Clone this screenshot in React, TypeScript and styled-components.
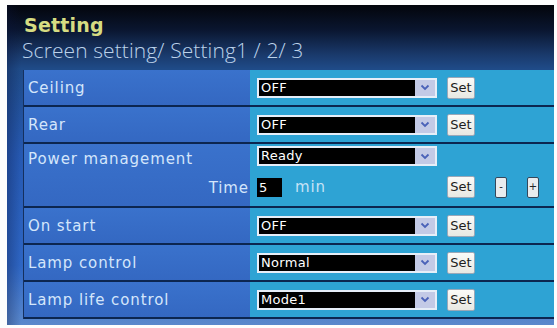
import React from 'react';
import styled, { createGlobalStyle } from 'styled-components';

const Global = createGlobalStyle`
  html, body {
    margin: 0;
    padding: 0;
    background: #ffffff;
  }
`;

const Frame = styled.div`
  width: 557px;
  height: 328px;
  box-sizing: border-box;
  padding: 5px 3px 3px 7px;
  background: #fdfdfd;
`;

const Panel = styled.div`
  height: 100%;
  box-sizing: border-box;
  display: flex;
  flex-direction: column;
  padding-left: 16px;
  background:
    linear-gradient(90deg, rgba(10, 20, 60, 0.3) 0px, rgba(10, 20, 60, 0) 14px),
    linear-gradient(180deg, #03050b 0px, #0a1630 25px, #1a3a6c 50px, #1f4b88 64px, #2659b2 150px, #2e66c4 260px, #5a88cc 320px);
`;

const Header = styled.div`
  height: 65px;
  box-sizing: border-box;
  padding: 8px 0 0 1px;
  display: flex;
  flex-direction: column;
`;

const Title = styled.div`
  font-family: 'DejaVu Sans', sans-serif;
  font-weight: bold;
  font-size: 19px;
  line-height: 24px;
  color: #d6dc82;
  letter-spacing: 0.2px;
`;

const Crumb = styled.div`
  font-family: 'Open Sans', sans-serif;
  font-weight: 300;
  font-size: 21px;
  line-height: 27px;
  color: #bcd2ea;
  margin-left: -2px;
  letter-spacing: 0.1px;
`;

const Table = styled.div`
  display: flex;
  flex-direction: column;
  border-left: 1px solid #15305e;
`;

const Row = styled.div<{ $tall?: boolean }>`
  display: grid;
  grid-template-columns: 226px 1fr;
  height: ${(p) => (p.$tall ? 62 : 35)}px;
  border-bottom: 2px solid #0c2650;
`;

const LabelCell = styled.div<{ $tall?: boolean }>`
  background: linear-gradient(180deg, #3a72cc, #3468c2);
  display: flex;
  flex-direction: column;
  justify-content: ${(p) => (p.$tall ? 'space-between' : 'center')};
  padding: ${(p) => (p.$tall ? '4px 0 7px 4px' : '0 0 0 4px')};
  font-family: 'DejaVu Sans', sans-serif;
  font-size: 15px;
  letter-spacing: 0.9px;
  color: #d4e6fb;
`;

const LabelLine = styled.div<{ $right?: boolean }>`
  height: 22px;
  line-height: 22px;
  text-align: ${(p) => (p.$right ? 'right' : 'left')};
  padding-right: ${(p) => (p.$right ? '1px' : '0')};
`;

const ValueCell = styled.div<{ $tall?: boolean }>`
  background: #2ea3d4;
  display: flex;
  flex-direction: column;
  justify-content: ${(p) => (p.$tall ? 'space-between' : 'center')};
  padding: ${(p) => (p.$tall ? '1px 0 8px 7px' : '0 0 0 7px')};
`;

const Line = styled.div`
  display: flex;
  align-items: center;
  height: 22px;
`;

const Select = styled.div`
  width: 180px;
  height: 20px;
  box-sizing: border-box;
  border: 2px solid #e6eef8;
  display: flex;
  background: #000;
`;

const SelectText = styled.div`
  flex: 1;
  color: #ffffff;
  font-family: 'DejaVu Sans', sans-serif;
  font-size: 13px;
  line-height: 16px;
  padding-left: 2px;
  letter-spacing: 0.3px;
`;

const Arrow = styled.div`
  width: 20px;
  background: #c3cae6;
  display: flex;
  align-items: center;
  justify-content: center;
`;

const SetButton = styled.div`
  margin-left: 10px;
  width: 28px;
  height: 22px;
  box-sizing: border-box;
  border: 1px solid #9aa8b8;
  border-radius: 2px;
  background: linear-gradient(180deg, #fbfbf8, #e8e8e2);
  color: #1c1c1c;
  font-family: 'DejaVu Sans', sans-serif;
  font-size: 13px;
  line-height: 20px;
  text-align: center;
`;

const StepButton = styled.div<{ $gap: number }>`
  margin-left: ${(p) => p.$gap}px;
  width: 12px;
  height: 21px;
  box-sizing: border-box;
  border: 1px solid #34485c;
  border-radius: 2px;
  background: #e9ecee;
  color: #222;
  font-family: 'DejaVu Sans', sans-serif;
  font-size: 10px;
  line-height: 17px;
  text-align: center;
`;

const TimeInput = styled.div`
  width: 25px;
  height: 19px;
  background: #000;
  color: #fff;
  font-family: 'DejaVu Sans', sans-serif;
  font-size: 13px;
  line-height: 19px;
  padding-left: 2px;
  box-sizing: border-box;
`;

const Unit = styled.div`
  margin-left: 13px;
  width: 142px;
  font-family: 'DejaVu Sans', sans-serif;
  font-size: 15px;
  letter-spacing: 0.9px;
  color: #c6e2f6;
`;

const Footer = styled.div`
  flex: 1;
`;

function Chevron() {
  return (
    <svg width="10" height="7" viewBox="0 0 10 7">
      <path d="M1.5 1.5 L5 5 L8.5 1.5" fill="none" stroke="#4a62b8" strokeWidth="1.8" />
    </svg>
  );
}

function Dropdown({ value, withSet = true }: { value: string; withSet?: boolean }) {
  return (
    <Line>
      <Select>
        <SelectText>{value}</SelectText>
        <Arrow>
          <Chevron />
        </Arrow>
      </Select>
      {withSet && <SetButton>Set</SetButton>}
    </Line>
  );
}

const rows = [
  { label: 'Ceiling', value: 'OFF' },
  { label: 'Rear', value: 'OFF' },
  { label: 'Power management', value: 'Ready', tall: true },
  { label: 'On start', value: 'OFF' },
  { label: 'Lamp control', value: 'Normal' },
  { label: 'Lamp life control', value: 'Mode1' },
];

export default function App() {
  return (
    <>
      <Global />
      <Frame>
        <Panel>
          <Header>
            <Title>Setting</Title>
            <Crumb>Screen setting/ Setting1 / 2/ 3</Crumb>
          </Header>
          <Table>
            {rows.map((r) =>
              r.tall ? (
                <Row key={r.label} $tall>
                  <LabelCell $tall>
                    <LabelLine>{r.label}</LabelLine>
                    <LabelLine $right>Time</LabelLine>
                  </LabelCell>
                  <ValueCell $tall>
                    <Dropdown value={r.value} withSet={false} />
                    <Line>
                      <TimeInput>5</TimeInput>
                      <Unit>min</Unit>
                      <SetButton>Set</SetButton>
                      <StepButton $gap={20}>-</StepButton>
                      <StepButton $gap={20}>+</StepButton>
                    </Line>
                  </ValueCell>
                </Row>
              ) : (
                <Row key={r.label}>
                  <LabelCell>
                    <LabelLine>{r.label}</LabelLine>
                  </LabelCell>
                  <ValueCell>
                    <Dropdown value={r.value} />
                  </ValueCell>
                </Row>
              )
            )}
          </Table>
          <Footer />
        </Panel>
      </Frame>
    </>
  );
}
